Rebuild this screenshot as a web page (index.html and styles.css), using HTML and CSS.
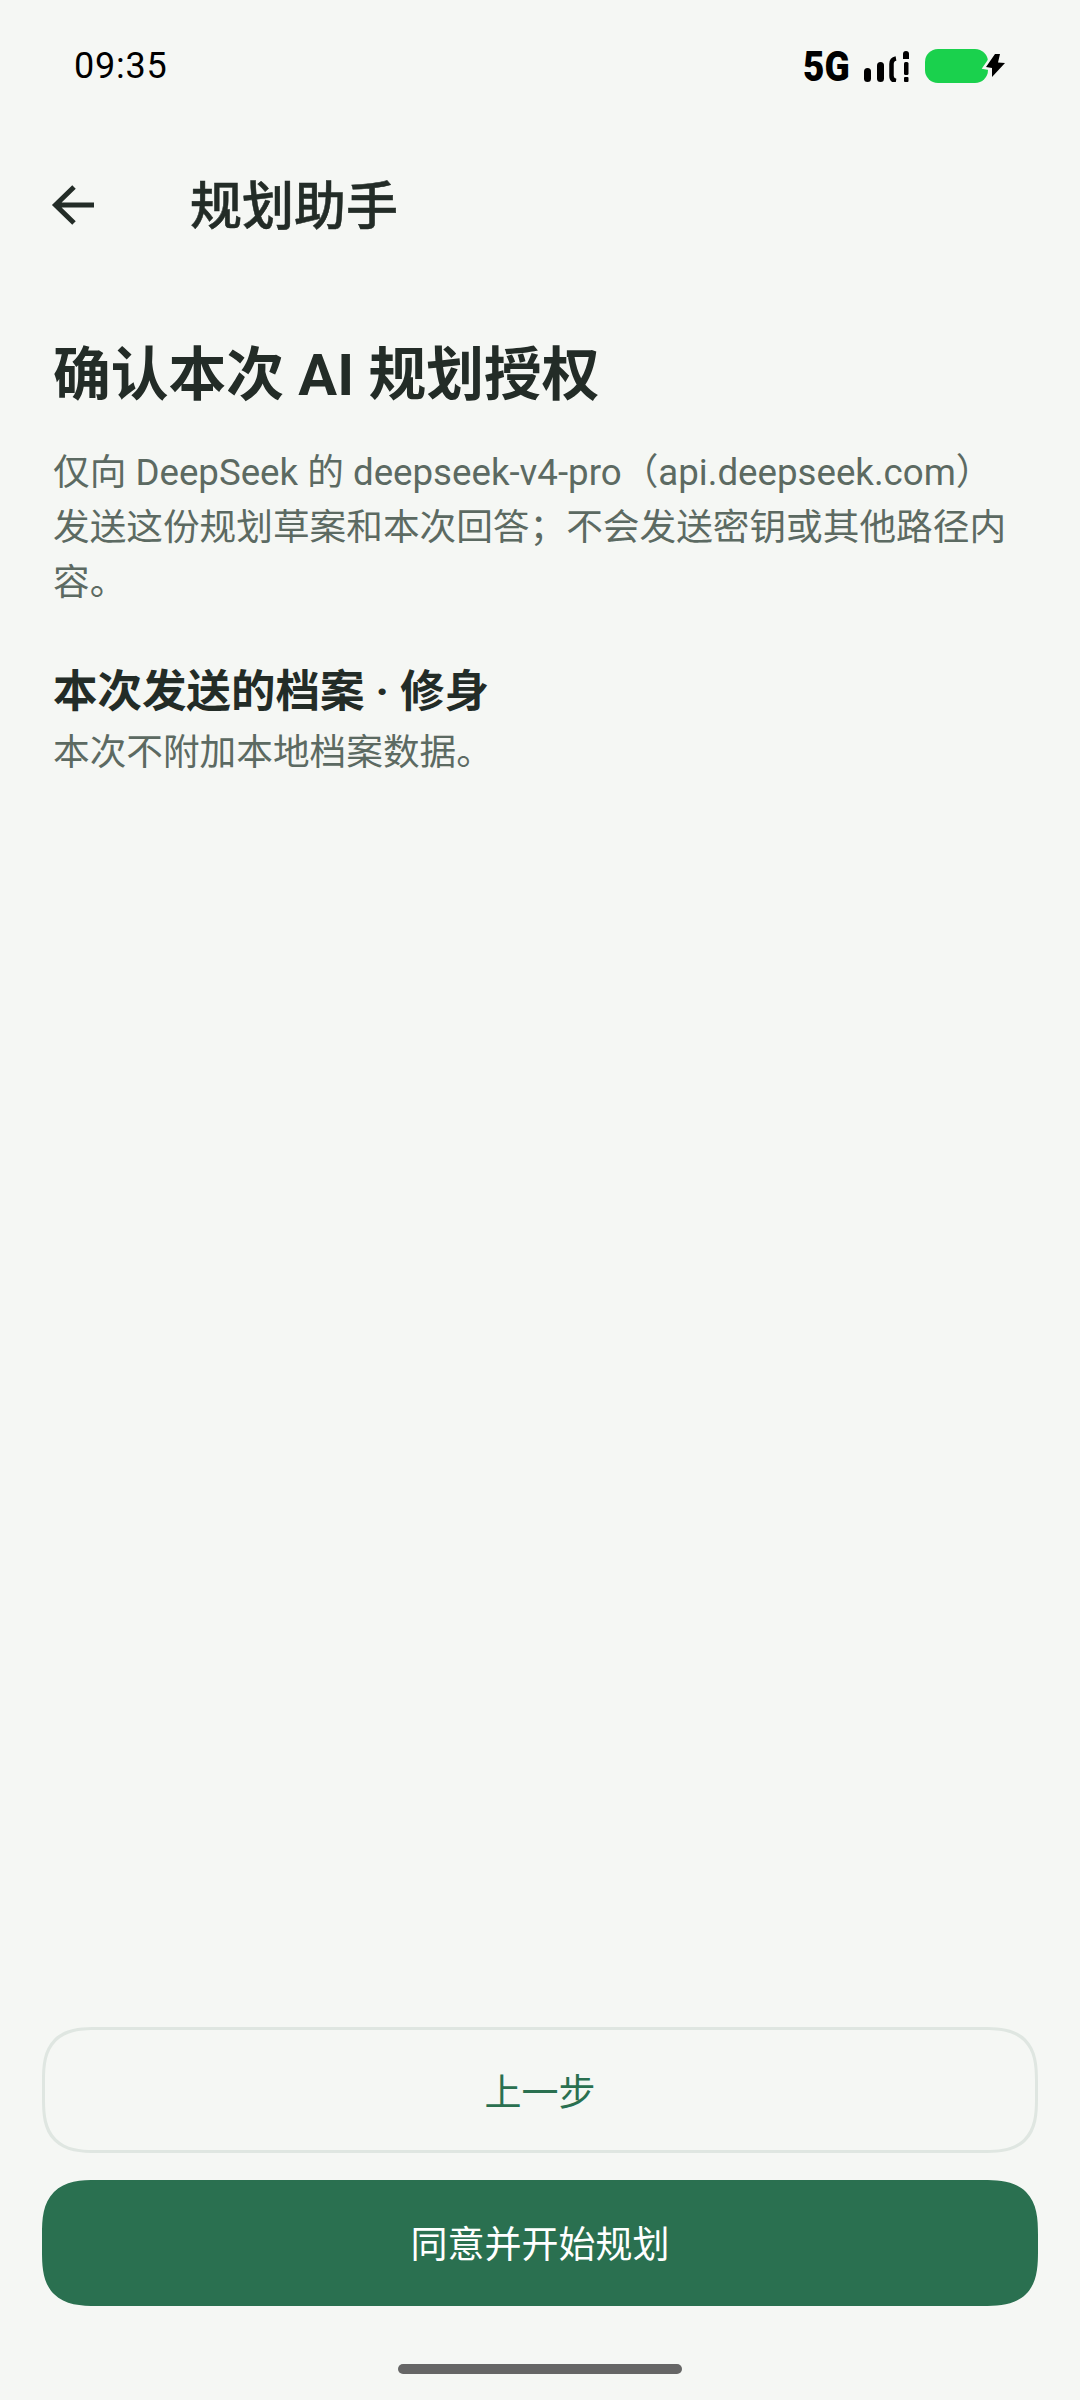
FILE: index.html
```html
<!DOCTYPE html>
<html lang="zh-CN">
<head>
<meta charset="utf-8">
<title>规划助手</title>
<link rel="stylesheet" href="styles.css">
</head>
<body>
<div class="screen">
  <div class="status">
    <span class="time">09:35</span>
    <div class="status-icons">
      <span class="net">5G</span>
      <svg class="signal" width="47" height="32" viewBox="0 0 47 32">
        <rect x="1" y="18" width="7" height="14" rx="3.500"/>
        <rect x="14" y="12" width="7" height="20" rx="3.500"/>
        <path d="M33 8.500C30 9 28.500 10.500 28.500 14V26C28.500 28.500 30 30.500 33 31" fill="none" stroke="#000" stroke-width="4.500"/>
        <path d="M40 9V4a3 3 0 0 1 6 0V9Z"/>
        <rect x="41" y="12" width="4.500" height="13" rx="1.500"/>
        <rect x="41" y="27" width="4.500" height="5" rx="1"/>
      </svg>
      <svg class="battery" width="80" height="36" viewBox="0 0 80 36">
        <rect x="0" y="1" width="63" height="34" rx="13" fill="#1ad14d"/>
        <path class="bolt" d="M70 6 61 19 67 20V29L80 15 73 14.500 75 6Z"/>
      </svg>
    </div>
  </div>
  <header class="topbar">
    <svg class="back" width="48" height="48" viewBox="0 0 48 48">
      <path d="M44 24H5M24 6 5.500 24 24 42" fill="none" stroke="#232c27" stroke-width="5"/>
    </svg>
    <h1 class="page-title">规划助手</h1>
  </header>
  <main class="content">
    <h2 class="heading">确认本次 AI 规划授权</h2>
    <p class="body-text">仅向 DeepSeek 的 deepseek-v4-pro（api.deepseek.com）发送这份规划草案和本次回答；不会发送密钥或其他路径内容。</p>
    <h3 class="section-title">本次发送的档案 · 修身</h3>
    <p class="section-note">本次不附加本地档案数据。</p>
  </main>
  <footer class="actions">
    <button class="btn btn-outline">上一步</button>
    <button class="btn btn-solid">同意并开始规划</button>
  </footer>
  <div class="home-bar"></div>
</div>
</body>
</html>
```
FILE: styles.css
```css
* { box-sizing: border-box; }
html, body { margin: 0; padding: 0; }
body {
  background: #f5f7f4;
  font-family: Roboto, "Noto Sans CJK SC", sans-serif;
}
.screen {
  width: 1080px;
  height: 2400px;
  display: flex;
  flex-direction: column;
  overflow: hidden;
}
.status {
  height: 166px;
  flex: none;
  display: flex;
  justify-content: space-between;
  align-items: flex-start;
  padding: 44px 75px 0 74px;
}
.time {
  font-size: 36px;
  line-height: 44px;
  color: #000;
  letter-spacing: .8px;
}
.status-icons {
  display: flex;
  align-items: center;
  height: 44px;
}
.net {
  width: 45px;
  margin-right: 15px;
  font-size: 43px;
  font-weight: 900;
  line-height: 44px;
  color: #000;
  white-space: nowrap;
  transform: scaleX(.86);
  transform-origin: left center;
}
.signal { fill: #000; margin-right: 15px; }
.battery { overflow: visible; }
.bolt {
  fill: #000;
  stroke: #f5f7f4;
  stroke-width: 5px;
  paint-order: stroke;
  stroke-linejoin: miter;
}
.topbar {
  display: flex;
  align-items: center;
  height: 80px;
  padding-left: 50px;
  flex: none;
}
.back { flex: none; margin-top: -2px; }
.page-title {
  margin: 0 0 0 92px;
  padding-top: 3px;
  font-size: 52px;
  line-height: 80px;
  font-weight: 500;
  -webkit-text-stroke: .5px #232c27;
  color: #232c27;
}
.content {
  flex: 1;
  padding: 93px 53px 0;
}
.heading {
  margin: 0;
  font-size: 57.750px;
  line-height: 72px;
  font-weight: 700;
  color: #232c27;
}
.body-text {
  margin: 34px 0 0;
  font-size: 36.670px;
  line-height: 55px;
  color: #5c6a62;
}
.section-title {
  margin: 53px 0 0;
  font-size: 44.500px;
  line-height: 58px;
  font-weight: 700;
  color: #232c27;
}
.section-note {
  margin: 7px 0 0;
  font-size: 36.670px;
  line-height: 50px;
  color: #5c6a62;
}
.actions {
  flex: none;
  display: flex;
  flex-direction: column;
  gap: 27px;
  padding: 0 42px;
}
.btn {
  height: 126px;
  border-radius: 42px;
  font-family: inherit;
  font-size: 37px;
  font-weight: 400;
  padding: 0;
}
@supports (corner-shape: superellipse(1.5)) {
  .btn {
    border-radius: 55px;
    corner-shape: superellipse(1.5);
  }
}
.btn-outline {
  background: transparent;
  border: 3px solid #dfe6e1;
  color: #2a7050;
}
.btn-solid {
  background: #2a7050;
  border: 0;
  color: #fff;
  padding-bottom: 2px;
}
.home-bar {
  flex: none;
  width: 284px;
  height: 10px;
  margin: 58px auto 26px;
  border-radius: 5px;
  background: #666;
}
```
